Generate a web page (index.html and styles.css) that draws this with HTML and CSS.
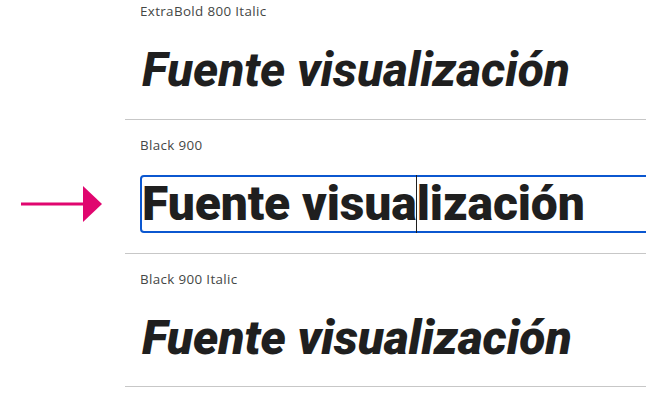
FILE: index.html
```html
<!DOCTYPE html>
<html lang="es">

<head>
  <meta charset="UTF-8" />
  <meta name="viewport" content="width=device-width, initial-scale=1.0" />
  <title>Roboto - estilos</title>
  <link rel="stylesheet" href="styles.css">
</head>

<body>
  <div class="styles-list">
    <div class="style-row">
      <div class="style-name">ExtraBold 800 Italic</div>
      <div class="sample w800 italic">Fuente visualización</div>
    </div>

    <div class="style-row">
      <span class="pointer">
        <svg width="82" height="38" viewBox="0 0 82 38">
          <line x1="0" y1="18" x2="64" y2="18" stroke="#e0066f" stroke-width="3" />
          <polygon points="62,0 81,18 62,36" fill="#e0066f" />
        </svg>
      </span>
      <div class="style-name">Black 900</div>
      <div class="sample w900 focused">Fuente visua<span class="caret"></span>lización</div>
    </div>

    <div class="style-row">
      <div class="style-name">Black 900 Italic</div>
      <div class="sample w900 italic">Fuente visualización</div>
    </div>
  </div>
</body>

</html>
```

FILE: styles.css
```css
body {
  margin: 0;
  background: #fff;
  font-family: Roboto, "Liberation Sans", sans-serif;
  color: #1f1f1f;
  overflow: hidden;
}

.styles-list {
  margin-top: -14px;
  margin-left: 125px;
}

.style-row {
  position: relative;
  padding: 16px 0 20px 15px;
  border-bottom: 1px solid #c7c7c7;
}

.style-row:last-child {
  padding-bottom: 19px;
}

.style-name {
  font-family: "Open Sans", Roboto, sans-serif;
  font-size: 13.4px;
  letter-spacing: 0.35px;
  line-height: 18px;
  color: #444746;
  margin-bottom: 21px;
}

.sample {
  font-size: 48px;
  line-height: 54px;
  letter-spacing: -0.1px;
  border: 2px solid transparent;
  border-radius: 4px;
  white-space: nowrap;
  position: relative;
}

.w800 {
  font-weight: 800;
}

.w900 {
  font-weight: 900;
}

.italic {
  font-style: italic;
}

.focused {
  border-color: #0b57d0;
  margin-right: -20px;
}

.caret {
  position: absolute;
  top: -2px;
  bottom: -2px;
  width: 1px;
  margin-left: -1px;
  background: #1f1f1f;
}

.pointer {
  position: absolute;
  left: -104px;
  top: 66px;
}
```
